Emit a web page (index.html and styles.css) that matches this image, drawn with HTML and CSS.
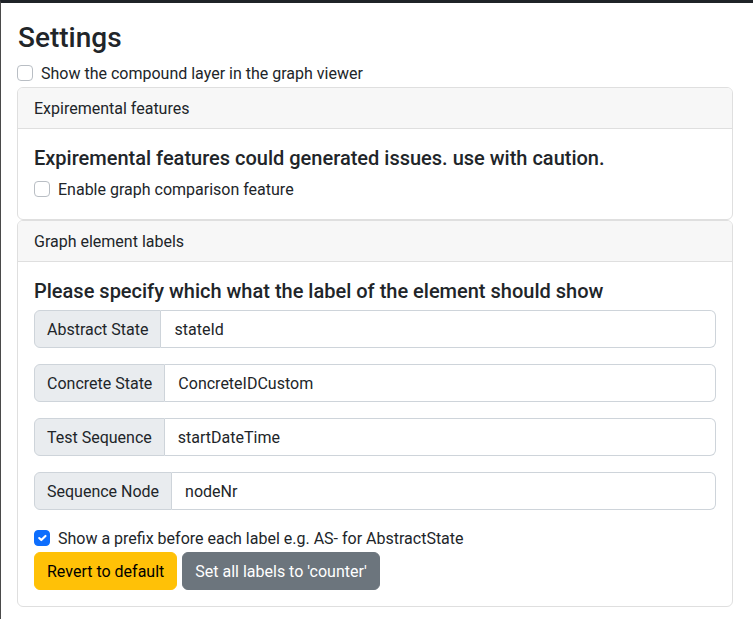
FILE: index.html
```html
<!DOCTYPE html>
<html lang="en">
<head>
<meta charset="utf-8">
<title>Settings</title>
<link rel="stylesheet" href="styles.css">
</head>
<body>
<div class="frame">
  <div class="content">
    <h3 class="title">Settings</h3>
    <label class="form-check">
      <span class="check"></span>
      <span class="check-label">Show the compound layer in the graph viewer</span>
    </label>
    <div class="card">
      <div class="card-header">Expiremental features</div>
      <div class="card-body">
        <h5 class="card-title">Expiremental features could generated issues. use with caution.</h5>
        <label class="form-check">
          <span class="check"></span>
          <span class="check-label">Enable graph comparison feature</span>
        </label>
      </div>
    </div>
    <div class="card">
      <div class="card-header">Graph element labels</div>
      <div class="card-body">
        <h5 class="card-title">Please specify which what the label of the element should show</h5>
        <div class="input-group">
          <span class="input-group-text">Abstract State</span>
          <span class="form-control">stateId</span>
        </div>
        <div class="input-group">
          <span class="input-group-text">Concrete State</span>
          <span class="form-control">ConcreteIDCustom</span>
        </div>
        <div class="input-group">
          <span class="input-group-text">Test Sequence</span>
          <span class="form-control">startDateTime</span>
        </div>
        <div class="input-group">
          <span class="input-group-text">Sequence Node</span>
          <span class="form-control">nodeNr</span>
        </div>
        <label class="form-check">
          <span class="check checked">
            <svg viewBox="0 0 20 20" width="16" height="16"><path fill="none" stroke="#fff" stroke-linecap="round" stroke-linejoin="round" stroke-width="3" d="M6 10l3 3l6-6"/></svg>
          </span>
          <span class="check-label">Show a prefix before each label e.g. AS- for AbstractState</span>
        </label>
        <div class="buttons">
          <button class="btn btn-warning">Revert to default</button>
          <button class="btn btn-secondary">Set all labels to 'counter'</button>
        </div>
      </div>
    </div>
  </div>
</div>
</body>
</html>
```
FILE: styles.css
```css
* { box-sizing: border-box; }
html, body { margin: 0; padding: 0; background: #fff; }
body {
  font-family: Roboto, "Liberation Sans", sans-serif;
  font-size: 16px;
  line-height: 1.5;
  color: #212529;
  width: 753px;
  height: 619px;
  overflow: hidden;
}
.frame {
  border-top: 3px solid #1f2328;
  border-left: 1px solid #4a4a4a;
  height: 619px;
}
.content {
  padding: 16px 20px 0 16px;
}
.title {
  margin: 2px 0 6px 1px;
  font-size: 28px;
  font-weight: 500;
  line-height: 1.2;
}
.form-check {
  display: flex;
  align-items: center;
  gap: 8px;
  height: 24px;
  margin-bottom: 2px;
}
.check-label {
  line-height: 22px;
  padding-top: 2px;
}
.check {
  width: 16px;
  height: 16px;
  border: 1px solid #b9bec4;
  border-radius: 4px;
  background: #fff;
  flex: none;
  display: flex;
  align-items: center;
  justify-content: center;
}
.check.checked {
  background: #0d6efd;
  border-color: #0d6efd;
}
.check svg { display: block; }
.card {
  border: 1px solid #dfdfdf;
  border-radius: 6px;
  background: #fff;
}
.card-header {
  background: #f7f7f7;
  border-bottom: 1px solid #dfdfdf;
  padding: 9px 16px 7px;
  border-radius: 5px 5px 0 0;
}
.card-body {
  padding: 16px;
}
.card-title {
  margin: 0 0 8px;
  padding-top: 1px;
  height: 24px;
  font-size: 20px;
  font-weight: 500;
  line-height: 1.2;
}
.input-group {
  display: flex;
  margin-bottom: 16px;
  height: 38px;
}
.input-group-text {
  background: #e9ecef;
  border: 1px solid #ced4da;
  border-radius: 6px 0 0 6px;
  padding: 7px 12px 5px;
  white-space: nowrap;
  flex: none;
}
.form-control {
  flex: 1;
  border: 1px solid #ced4da;
  border-left: 0;
  border-radius: 0 6px 6px 0;
  padding: 7px 12px 5px 13px;
}
.buttons {
  display: flex;
  gap: 5px;
}
.btn {
  font: inherit;
  line-height: 1.5;
  border: 1px solid transparent;
  border-radius: 6px;
  padding: 7px 12px 5px;
  height: 38px;
}
.btn-warning { background: #ffc107; border-color: #ffc107; color: #000; }
.btn-secondary { background: #6c757d; border-color: #6c757d; color: #fff; }
```
